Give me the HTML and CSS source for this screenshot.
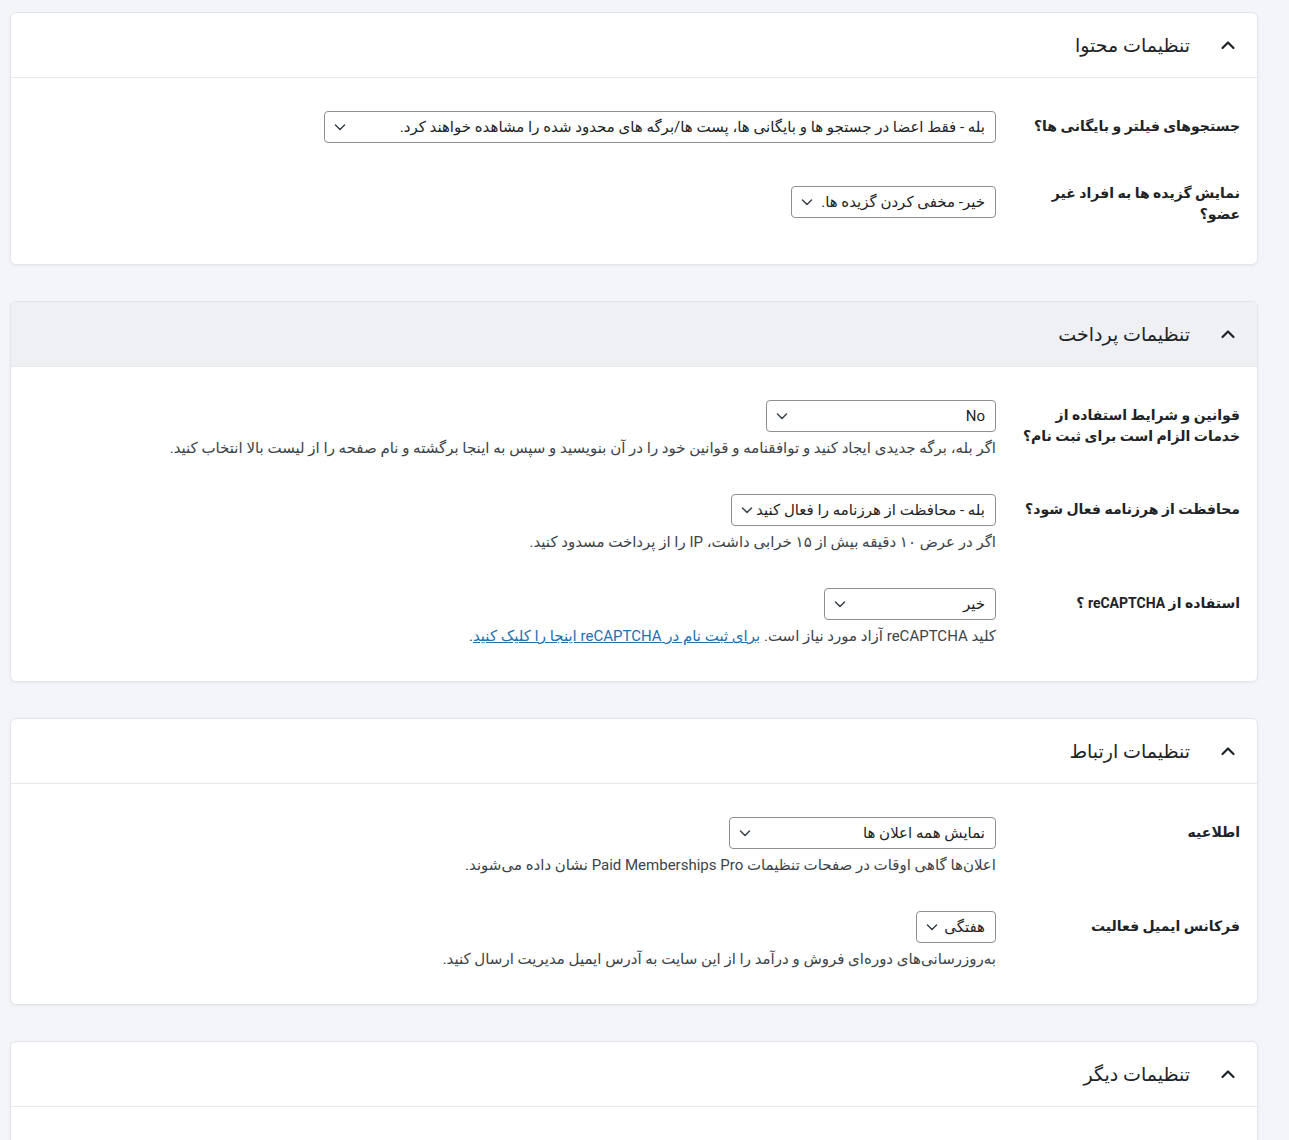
FILE: index.html
```html
<!DOCTYPE html>
<html lang="fa" dir="rtl">
<head>
    <meta charset="UTF-8">
    <meta name="viewport" content="width=device-width, initial-scale=1.0">
    <title>تنظیمات</title>
    <link rel="stylesheet" href="styles.css">
</head>
<body>
    <div class="wrap">
        <!-- Content settings -->
        <section class="card">
            <div class="card-head">
                <svg class="chev" viewBox="0 0 16 16"><path d="M2.5 11 L8 5.5 L13.5 11"/></svg>
                <h2>تنظیمات محتوا</h2>
            </div>
            <div class="card-body">
                <div class="row">
                    <div class="label">جستجوهای فیلتر و بایگانی ها؟</div>
                    <div class="field">
                        <div class="select w-672">
                            <span>بله - فقط اعضا در جستجو ها و بایگانی ها، پست ها/برگه های محدود شده را مشاهده خواهند کرد.</span>
                            <svg class="arrow" viewBox="0 0 12 8"><path d="M1.5 2 L6 6.5 L10.5 2"/></svg>
                        </div>
                    </div>
                </div>
                <div class="row">
                    <div class="label">نمایش گزیده ها به افراد غیر<br>عضو؟</div>
                    <div class="field">
                        <div class="select w-205">
                            <span>خیر- مخفی کردن گزیده ها.</span>
                            <svg class="arrow" viewBox="0 0 12 8"><path d="M1.5 2 L6 6.5 L10.5 2"/></svg>
                        </div>
                    </div>
                </div>
            </div>
        </section>

        <!-- Payment settings -->
        <section class="card">
            <div class="card-head active">
                <svg class="chev" viewBox="0 0 16 16"><path d="M2.5 11 L8 5.5 L13.5 11"/></svg>
                <h2>تنظیمات پرداخت</h2>
            </div>
            <div class="card-body tight">
                <div class="row">
                    <div class="label">قوانین و شرایط استفاده از<br>خدمات الزام است برای ثبت نام؟</div>
                    <div class="field">
                        <div class="select w-230">
                            <span>No</span>
                            <svg class="arrow" viewBox="0 0 12 8"><path d="M1.5 2 L6 6.5 L10.5 2"/></svg>
                        </div>
                        <p class="desc">اگر بله، برگه جدیدی ایجاد کنید و توافقنامه و قوانین خود را در آن بنویسید و سپس به اینجا برگشته و نام صفحه را از لیست بالا انتخاب کنید.</p>
                    </div>
                </div>
                <div class="row">
                    <div class="label">محافظت از هرزنامه فعال شود؟</div>
                    <div class="field">
                        <div class="select w-265">
                            <span>بله - محافظت از هرزنامه را فعال کنید</span>
                            <svg class="arrow" viewBox="0 0 12 8"><path d="M1.5 2 L6 6.5 L10.5 2"/></svg>
                        </div>
                        <p class="desc">اگر در عرض ۱۰ دقیقه بیش از ۱۵ خرابی داشت، IP را از پرداخت مسدود کنید.</p>
                    </div>
                </div>
                <div class="row">
                    <div class="label">استفاده از reCAPTCHA ؟</div>
                    <div class="field">
                        <div class="select w-172">
                            <span>خیر</span>
                            <svg class="arrow" viewBox="0 0 12 8"><path d="M1.5 2 L6 6.5 L10.5 2"/></svg>
                        </div>
                        <p class="desc">کلید reCAPTCHA آزاد مورد نیاز است. <a href="#">برای ثبت نام در reCAPTCHA اینجا را کلیک کنید</a>.</p>
                    </div>
                </div>
            </div>
        </section>

        <!-- Communication settings -->
        <section class="card">
            <div class="card-head">
                <svg class="chev" viewBox="0 0 16 16"><path d="M2.5 11 L8 5.5 L13.5 11"/></svg>
                <h2>تنظیمات ارتباط</h2>
            </div>
            <div class="card-body tight">
                <div class="row">
                    <div class="label">اطلاعیه</div>
                    <div class="field">
                        <div class="select w-267">
                            <span>نمایش همه اعلان ها</span>
                            <svg class="arrow" viewBox="0 0 12 8"><path d="M1.5 2 L6 6.5 L10.5 2"/></svg>
                        </div>
                        <p class="desc">اعلان‌ها گاهی اوقات در صفحات تنظیمات Paid Memberships Pro نشان داده می‌شوند.</p>
                    </div>
                </div>
                <div class="row">
                    <div class="label">فرکانس ایمیل فعالیت</div>
                    <div class="field">
                        <div class="select w-80">
                            <span>هفتگی</span>
                            <svg class="arrow" viewBox="0 0 12 8"><path d="M1.5 2 L6 6.5 L10.5 2"/></svg>
                        </div>
                        <p class="desc">به‌روزرسانی‌های دوره‌ای فروش و درآمد را از این سایت به آدرس ایمیل مدیریت ارسال کنید.</p>
                    </div>
                </div>
            </div>
        </section>

        <!-- Other settings -->
        <section class="card">
            <div class="card-head">
                <svg class="chev" viewBox="0 0 16 16"><path d="M2.5 11 L8 5.5 L13.5 11"/></svg>
                <h2>تنظیمات دیگر</h2>
            </div>
            <div class="card-body">
                <div class="row">
                    <div class="label">&nbsp;</div>
                    <div class="field"></div>
                </div>
            </div>
        </section>
    </div>
</body>
</html>
```

FILE: styles.css
```css
/* Page */
html, body {
    margin: 0;
    background: #f3f5f8;
}
body {
    font-family: Roboto, "DejaVu Sans", sans-serif;
    font-size: 15px;
    color: #1d2327;
    height: 1140px;
    overflow: hidden;
}
.wrap {
    display: flex;
    flex-direction: column;
    gap: 36px;
    padding: 12px 31px 0 10px;
}

/* Cards */
.card {
    background: #fff;
    border: 1px solid #e2e5ea;
    border-radius: 6px;
    box-shadow: 0 1px 3px rgba(0, 0, 0, 0.05);
    overflow: hidden;
}
.card-head {
    display: flex;
    align-items: center;
    gap: 30px;
    height: 64px;
    padding: 0 21px;
    border-bottom: 1px solid #e6e8ec;
}
.card-head.active {
    background: #eef0f4;
}
.card-head h2 {
    margin: 0;
    font-size: 19px;
    font-weight: 500;
    color: #1d2327;
}
.chev {
    width: 16px;
    height: 16px;
    fill: none;
    stroke: #1d2327;
    stroke-width: 2.2;
    stroke-linecap: round;
    stroke-linejoin: round;
}
.card-body {
    padding: 18px 17px 19px;
}
.card-body.tight {
    padding-bottom: 14px;
}

/* Form rows */
.row {
    display: flex;
    align-items: stretch;
}
.label {
    width: 234px;
    flex-shrink: 0;
    box-sizing: border-box;
    padding: 20px 0 20px 20px;
    font-size: 14px;
    font-weight: bold;
    line-height: 21px;
    white-space: nowrap;
    align-self: flex-start;
}
.field {
    flex: 1;
    padding: 15px 10px 20px;
    align-self: center;
}
.select {
    display: flex;
    align-items: center;
    justify-content: space-between;
    box-sizing: border-box;
    height: 32px;
    padding: 0 10px 0 9px;
    border: 1px solid #8c8f94;
    border-radius: 4px;
    background: #fff;
    color: #1d2327;
    white-space: nowrap;
}
.arrow {
    width: 12px;
    height: 8px;
    fill: none;
    stroke: #3c434a;
    stroke-width: 1.5;
    stroke-linecap: round;
    stroke-linejoin: round;
}
.w-672 { width: 672px; }
.w-205 { width: 205px; }
.w-230 { width: 230px; }
.w-265 { width: 265px; }
.w-172 { width: 172px; }
.w-267 { width: 267px; }
.w-80 { width: 80px; }
.desc {
    margin: 5px 0 0;
    line-height: 22px;
    color: #3c434a;
}
.desc a {
    color: #2271b1;
}
```
